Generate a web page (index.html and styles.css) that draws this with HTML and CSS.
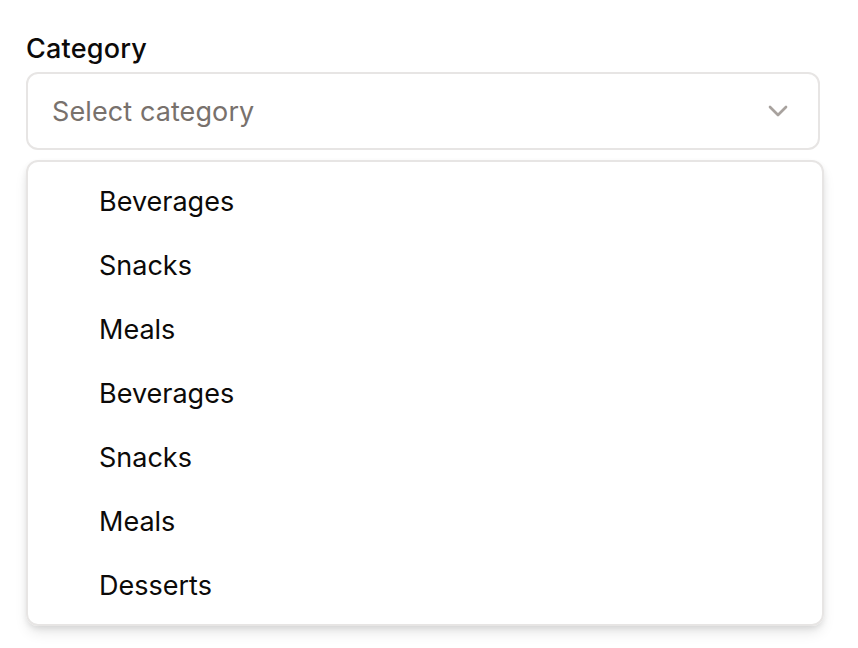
FILE: index.html
```html
<!DOCTYPE html>
<html>
<head>
<meta charset="utf-8">
<link rel="stylesheet" href="styles.css">
</head>
<body>
<div class="field">
  <label class="label">Category</label>
  <div class="trigger">
    <span class="placeholder">Select category</span>
    <svg class="chev" width="32" height="32" viewBox="0 0 24 24" fill="none" stroke="currentColor" stroke-width="2" stroke-linecap="round" stroke-linejoin="round"><path d="m6 9 6 6 6-6"/></svg>
  </div>
  <div class="menu">
    <div class="item">Beverages</div>
    <div class="item">Snacks</div>
    <div class="item">Meals</div>
    <div class="item">Beverages</div>
    <div class="item">Snacks</div>
    <div class="item">Meals</div>
    <div class="item">Desserts</div>
  </div>
</div>
</body>
</html>
```
FILE: styles.css
```css
html, body { margin: 0; background: #fff; }
body {
  font-family: Inter, "Noto Sans", sans-serif;
  color: #0c0a09;
  min-height: 648px;
}
.field {
  padding: 35px 0 21px 26px;
  width: 798px;
  display: flex;
  flex-direction: column;
}
.label {
  font-size: 27px;
  font-weight: 500;
  letter-spacing: 0.2px;
  line-height: 28px;
  margin-bottom: 9px;
}
.trigger {
  width: 794px;
  height: 78px;
  box-sizing: border-box;
  border: 2px solid #e7e5e4;
  border-radius: 12px;
  display: flex;
  align-items: center;
  justify-content: space-between;
  padding: 0 24px 0 24px;
}
.placeholder {
  font-size: 27px;
  letter-spacing: 0.1px;
  color: #78716c;
}
.chev { color: #a8a29e; }
.menu {
  margin-top: 10px;
  box-sizing: border-box;
  width: 798px;
  border: 2px solid #e7e5e4;
  border-radius: 12px;
  padding: 7px 8px;
  box-shadow: 0 8px 14px -2px rgba(0,0,0,0.10), 0 3px 6px -1px rgba(0,0,0,0.10);
}
.item {
  height: 64px;
  display: flex;
  align-items: center;
  padding-left: 63px;
  font-size: 27px;
}
```
